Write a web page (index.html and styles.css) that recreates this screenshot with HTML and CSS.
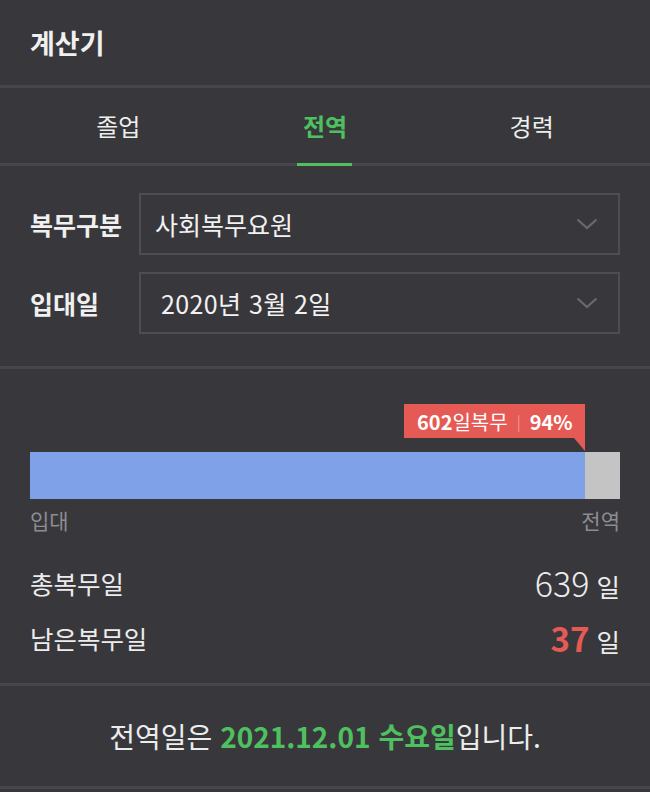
FILE: index.html
```html
<!DOCTYPE html>
<html lang="ko">
<head>
    <meta charset="UTF-8">
    <meta name="viewport" content="width=device-width, initial-scale=1.0">
    <title>계산기</title>
    <link rel="stylesheet" href="styles.css">
</head>
<body>
    <header class="header">
        <h1>계산기</h1>
    </header>
    <nav class="tabs">
        <div class="tab">졸업</div>
        <div class="tab active">전역</div>
        <div class="tab">경력</div>
    </nav>
    <section class="form">
        <div class="form-row">
            <label>복무구분</label>
            <div class="select">
                <span>사회복무요원</span>
                <svg class="chevron" width="22" height="12" viewBox="0 0 22 12"><path d="M1.5 1.5 L11 10 L20.5 1.5" fill="none" stroke="#6a6a6e" stroke-width="2.2"/></svg>
            </div>
        </div>
        <div class="form-row">
            <label>입대일</label>
            <div class="select">
                <span class="date">2020년 3월 2일</span>
                <svg class="chevron" width="22" height="12" viewBox="0 0 22 12"><path d="M1.5 1.5 L11 10 L20.5 1.5" fill="none" stroke="#6a6a6e" stroke-width="2.2"/></svg>
            </div>
        </div>
    </section>
    <section class="progress">
        <div class="bar">
            <div class="fill" style="width: 94%;">
                <div class="tooltip">
                    <b>602</b>일복무<span class="sep">|</span><b>94%</b>
                </div>
            </div>
        </div>
        <div class="bar-labels">
            <span>입대</span>
            <span>전역</span>
        </div>
        <div class="stats">
            <div class="stat">
                <span class="stat-name">총복무일</span>
                <span class="stat-value"><span class="num">639</span> 일</span>
            </div>
            <div class="stat">
                <span class="stat-name">남은복무일</span>
                <span class="stat-value"><span class="num red">37</span> 일</span>
            </div>
        </div>
    </section>
    <footer class="result">
        전역일은&nbsp;<strong>2021.12.01 수요일</strong>입니다.
    </footer>
</body>
</html>
```

FILE: styles.css
```css
body {
    margin: 0;
    background-color: #38383c;
    color: #f0f0f0;
    font-family: "Noto Sans CJK KR", "Noto Sans", sans-serif;
}
.header {
    height: 85px;
    padding-left: 30px;
    display: flex;
    align-items: center;
    border-bottom: 3px solid #47474b;
}
.header h1 {
    margin: 0;
    font-size: 27px;
    font-weight: 700;
}
.tabs {
    display: flex;
    height: 75px;
    padding: 0 15px;
    border-bottom: 3px solid #47474b;
}
.tab {
    flex: 1;
    display: flex;
    justify-content: center;
    align-items: center;
    font-size: 24px;
    color: #eeeeee;
    position: relative;
}
.tab.active {
    color: #4fc05f;
    font-weight: 700;
}
.tab.active::after {
    content: "";
    position: absolute;
    bottom: -3px;
    left: 50%;
    width: 55px;
    margin-left: -28px;
    height: 3px;
    background: #4fc05f;
}
.form {
    padding: 27px 30px 32px;
    display: flex;
    flex-direction: column;
    gap: 17px;
    border-bottom: 3px solid #47474b;
}
.form-row {
    display: flex;
    align-items: center;
}
.form-row label {
    width: 109px;
    font-size: 25px;
    font-weight: 700;
    white-space: nowrap;
}
.select {
    flex: 1;
    height: 58px;
    border: 2px solid #4e4e52;
    display: flex;
    align-items: center;
    justify-content: space-between;
    padding: 0 20px 0 14px;
    font-size: 25px;
    color: #f2f2f2;
}
.select .date {
    margin-left: 6px;
    letter-spacing: 0.4px;
}
.progress {
    padding: 83px 30px 18px;
    border-bottom: 3px solid #47474b;
}
.bar {
    height: 47px;
    background: #c4c4c4;
}
.fill {
    height: 100%;
    background: #7fa1e8;
    position: relative;
}
.tooltip {
    position: absolute;
    right: 0;
    bottom: 61px;
    height: 34px;
    padding: 0 12px 0 13px;
    background: #e55a55;
    color: #fff;
    font-size: 20px;
    display: flex;
    align-items: center;
    white-space: nowrap;
}
.tooltip::after {
    content: "";
    position: absolute;
    right: 0;
    top: 100%;
    border-top: 13px solid #e55a55;
    border-left: 11px solid transparent;
}
.tooltip .sep {
    color: #f09a96;
    font-size: 15px;
    margin: 0 9px;
}
.bar-labels {
    display: flex;
    justify-content: space-between;
    font-size: 21px;
    color: #8d8d91;
    height: 38px;
    align-items: center;
    margin-top: 2px;
}
.stats {
    margin-top: 16px;
}
.stat {
    height: 55px;
    display: flex;
    justify-content: space-between;
    align-items: center;
}
.stat-name {
    font-size: 25.5px;
    color: #ececec;
}
.stat-value {
    font-size: 25.5px;
    color: #ececec;
}
.stat-value .num {
    font-size: 34px;
    font-weight: 300;
}
.stat-value .num.red {
    color: #e55a55;
    font-weight: 700;
    font-size: 33px;
}
.result {
    height: 100px;
    display: flex;
    justify-content: center;
    align-items: center;
    font-size: 28px;
    color: #ececec;
    border-bottom: 3px solid #47474b;
    white-space: nowrap;
}
.result strong {
    color: #4fc05f;
}
```
